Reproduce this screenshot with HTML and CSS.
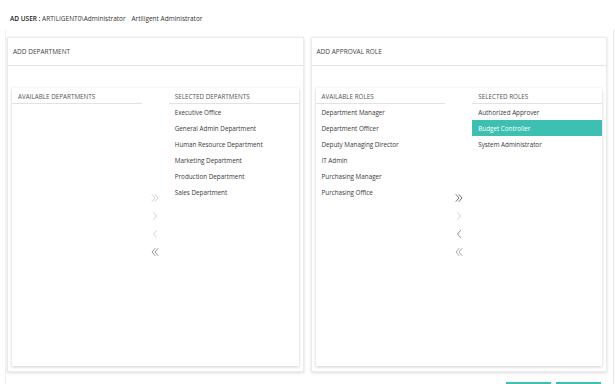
FILE: index.html
```html
<!DOCTYPE html>
<html>
<head>
<meta charset="utf-8">
<link rel="stylesheet" href="styles.css">
</head>
<body>
<div class="user"><span class="lbl">AD USER :</span> <span class="val">ARTILIGENT0\Administrator</span> <span class="val name">Artiligent Administrator</span></div>
<div class="wrap">
  <div class="cards">
    <section class="card">
      <div class="card-h">ADD DEPARTMENT</div>
      <div class="card-b">
        <div class="picker">
          <div class="col">
            <div class="col-h">AVAILABLE DEPARTMENTS</div>
          </div>
          <div class="mid">
            <span class="btn off"><svg viewBox="0 0 10 10"><polyline points="2,1.5 5,5 2,8.5"/><polyline points="5,1.5 8,5 5,8.5"/></svg></span>
            <span class="btn off"><svg viewBox="0 0 10 10"><polyline points="3.5,1.5 6.5,5 3.5,8.5"/></svg></span>
            <span class="btn off"><svg viewBox="0 0 10 10"><polyline points="6.5,1.5 3.5,5 6.5,8.5"/></svg></span>
            <span class="btn on2"><svg viewBox="0 0 10 10"><polyline points="5,1.5 2,5 5,8.5"/><polyline points="8,1.5 5,5 8,8.5"/></svg></span>
          </div>
          <div class="col">
            <div class="col-h">SELECTED DEPARTMENTS</div>
            <div class="item">Executive Office</div>
            <div class="item">General Admin Department</div>
            <div class="item">Human Resource Department</div>
            <div class="item">Marketing Department</div>
            <div class="item">Production Department</div>
            <div class="item">Sales Department</div>
          </div>
        </div>
      </div>
    </section>
    <section class="card">
      <div class="card-h">ADD APPROVAL ROLE</div>
      <div class="card-b">
        <div class="picker">
          <div class="col">
            <div class="col-h">AVAILABLE ROLES</div>
            <div class="item">Department Manager</div>
            <div class="item">Department Officer</div>
            <div class="item">Deputy Managing Director</div>
            <div class="item">IT Admin</div>
            <div class="item">Purchasing Manager</div>
            <div class="item">Purchasing Office</div>
          </div>
          <div class="mid">
            <span class="btn on1"><svg viewBox="0 0 10 10"><polyline points="2,1.5 5,5 2,8.5"/><polyline points="5,1.5 8,5 5,8.5"/></svg></span>
            <span class="btn off"><svg viewBox="0 0 10 10"><polyline points="3.5,1.5 6.5,5 3.5,8.5"/></svg></span>
            <span class="btn on2"><svg viewBox="0 0 10 10"><polyline points="6.5,1.5 3.5,5 6.5,8.5"/></svg></span>
            <span class="btn on3"><svg viewBox="0 0 10 10"><polyline points="5,1.5 2,5 5,8.5"/><polyline points="8,1.5 5,5 8,8.5"/></svg></span>
          </div>
          <div class="col">
            <div class="col-h">SELECTED ROLES</div>
            <div class="item">Authorized Approver</div>
            <div class="item sel">Budget Controller</div>
            <div class="item">System Administrator</div>
          </div>
        </div>
      </div>
    </section>
  </div>
  <div class="actions">
    <button class="tbtn" aria-label="Save"></button>
    <button class="tbtn" aria-label="Cancel"></button>
  </div>
</div>
</body>
</html>
```
FILE: styles.css
```css
html, body {
  margin: 0;
  padding: 0;
  background: #fff;
  overflow: hidden;
}
body {
  font-family: "Open Sans", "Noto Sans", sans-serif;
  color: #333;
  font-size: 6.5px;
  width: 615px;
  height: 384px;
}
.user {
  padding: 14px 0 0 10px;
  height: 16px;
  line-height: 10px;
  font-size: 6.5px;
  color: #333;
}
.user .lbl { color: #222; font-weight: 600; }
.user .name { margin-left: 4px; }
.wrap {
  margin: 0 1px 0 5px;
  border-left: 1px solid #efefef;
  border-right: 1px solid #e6e6e6;
  padding: 7px 6px 0 1px;
  height: 347px;
  overflow: hidden;
}
.cards {
  display: flex;
  gap: 7px;
}
.card {
  flex: 1;
  height: 333px;
  background: #fff;
  border: 1px solid #ebebeb;
  box-shadow: 0 1px 3px rgba(0,0,0,0.14);
  display: flex;
  flex-direction: column;
}
.card-h {
  height: 27px;
  line-height: 28px;
  padding-left: 5px;
  border-bottom: 1px solid #e4e4e4;
  color: #444;
  font-size: 6.5px;
}
.card-b {
  flex: 1;
  padding: 22px 4px 5px 4px;
  display: flex;
}
.picker {
  flex: 1;
  display: grid;
  grid-template-columns: 1fr 27px 1fr;
  background: #fff;
  box-shadow: 0 1px 3px rgba(0,0,0,0.2);
}
.col-h {
  height: 15px;
  line-height: 18px;
  padding-left: 6px;
  border-bottom: 1px solid #e2e2e2;
  color: #555;
  font-size: 6.3px;
}
.item {
  height: 16px;
  line-height: 17px;
  padding-left: 6px;
  color: #3a3a3a;
  font-size: 6.3px;
}
.item.sel {
  background: #3dbfb2;
  color: #fff;
}
.mid {
  padding-top: 101px;
  display: flex;
  flex-direction: column;
  align-items: center;
}
.btn {
  height: 18px;
  display: flex;
  align-items: center;
  justify-content: center;
}
.btn svg {
  width: 10px;
  height: 10px;
  fill: none;
  stroke-width: 0.9;
  stroke-linecap: round;
  stroke-linejoin: round;
}
.btn.off svg { stroke: #cfcfcf; }
.btn.on1 svg { stroke: #666; }
.btn.on2 svg { stroke: #888; }
.btn.on3 svg { stroke: #9a9a9a; }
.actions {
  display: flex;
  justify-content: flex-end;
  gap: 5px;
  margin-top: 10px;
  padding-right: 6px;
}
.tbtn {
  width: 45px;
  height: 20px;
  border: 0;
  background: #3dbfb2;
  padding: 0;
}
```
